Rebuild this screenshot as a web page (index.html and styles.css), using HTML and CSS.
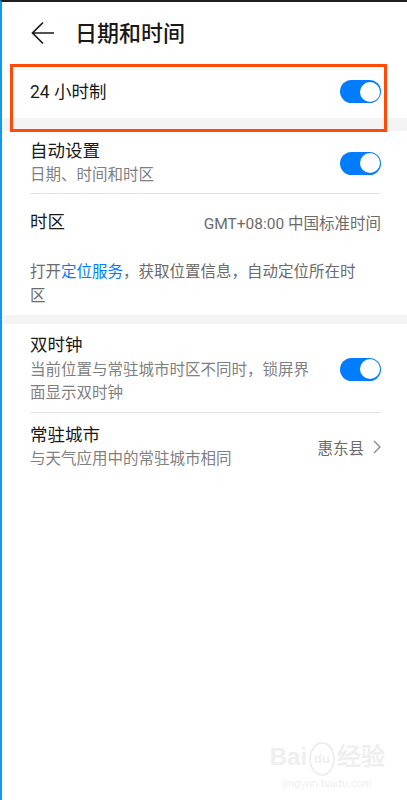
FILE: index.html
```html
<!DOCTYPE html>
<html lang="zh-CN">
<head>
    <meta charset="UTF-8">
    <meta name="viewport" content="width=device-width, initial-scale=1.0">
    <title>日期和时间</title>
    <link rel="stylesheet" href="styles.css">
</head>
<body>
    <div class="screen">
        <div class="header">
            <svg class="back" width="24" height="24" viewBox="0 0 24 24">
                <path d="M1.5 12 H23 M12 1.5 L1.5 12 L12 22.5" fill="none" stroke="#1a1a1a" stroke-width="1.7"/>
            </svg>
            <h1>日期和时间</h1>
        </div>

        <div class="row single">
            <div class="text">
                <div class="title">24 小时制</div>
            </div>
            <div class="switch on"><span></span></div>
        </div>
        <div class="band first"></div>

        <div class="row">
            <div class="text">
                <div class="title">自动设置</div>
                <div class="sub">日期、时间和时区</div>
            </div>
            <div class="switch on"><span></span></div>
        </div>
        <div class="divider"></div>
        <div class="row zone">
            <div class="text">
                <div class="title">时区</div>
            </div>
            <div class="value">GMT+08:00 中国标准时间</div>
        </div>
        <p class="note">打开<a href="#">定位服务</a>，获取位置信息，自动定位所在时区</p>
        <div class="band"></div>

        <div class="row dual">
            <div class="text">
                <div class="title">双时钟</div>
                <div class="sub">当前位置与常驻城市时区不同时，锁屏界面显示双时钟</div>
            </div>
            <div class="switch on"><span></span></div>
        </div>
        <div class="divider"></div>
        <div class="row city">
            <div class="text">
                <div class="title">常驻城市</div>
                <div class="sub">与天气应用中的常驻城市相同</div>
            </div>
            <div class="value">惠东县
                <svg class="chevron" width="8" height="14" viewBox="0 0 8 14">
                    <path d="M1 1 L7 7 L1 13" fill="none" stroke="#8c8c8c" stroke-width="1.4"/>
                </svg>
            </div>
        </div>

        <!-- рамка-выделение поверх первой строки -->
        <div class="mark"></div>

        <div class="watermark">
            <div class="wm-logo">Bai<span class="paw">du</span>经验</div>
            <div class="wm-url">jingyan.baidu.com</div>
        </div>
    </div>
</body>
</html>
```

FILE: styles.css
```css
body {
    margin: 0;
    background-color: #fff;
    font-family: Roboto, "Noto Sans CJK SC", sans-serif;
    color: #1a1a1a;
}
.screen {
    position: relative;
    width: 405px;
    height: 798px;
    border-top: 2px solid #1f1f1f;
    border-left: 2px solid #0f9bea;
    overflow: hidden;
}
.header {
    display: flex;
    align-items: center;
    height: 63px;
    padding-left: 29px;
}
.back {
    margin-top: -2px;
}
h1 {
    margin: 0 0 0 20px;
    font-size: 22px;
    font-weight: 500;
    line-height: 30px;
    color: #1a1a1a;
}
.row {
    display: flex;
    align-items: center;
    justify-content: space-between;
    padding: 8px 26px 6px 28px;
}
.row.single {
    height: 53px;
    padding-top: 0;
    padding-bottom: 0;
    box-sizing: border-box;
}
.row.zone {
    height: 56px;
    padding-top: 0;
    padding-bottom: 0;
    box-sizing: border-box;
}
.row.dual {
    padding-top: 9px;
    padding-bottom: 7px;
}
.row.city {
    padding-top: 10px;
    padding-bottom: 8px;
}
.text {
    flex: 1;
}
.title {
    font-size: 17.5px;
    line-height: 24px;
    color: #1a1a1a;
}
.sub {
    font-size: 15.5px;
    line-height: 24px;
    color: #7f7f7f;
}
.dual .sub {
    line-height: 23px;
    margin-top: 2px;
    padding-right: 20px;
}
.value {
    display: flex;
    align-items: center;
    font-size: 15.5px;
    color: #6b6b6b;
}
.chevron {
    margin-left: 9px;
}
.switch {
    width: 41px;
    height: 23px;
    border-radius: 12px;
    background-color: #007dff;
    position: relative;
    flex-shrink: 0;
}
.switch span {
    position: absolute;
    right: 1.5px;
    top: 1.5px;
    width: 20px;
    height: 20px;
    border-radius: 50%;
    background-color: #fff;
}
.band {
    height: 9px;
    background-color: #f4f4f4;
}
.band.first {
    height: 13px;
}
.divider {
    height: 1px;
    margin: 0 26px 0 28px;
    background-color: #e3e3e3;
}
.note {
    margin: 0;
    padding: 10px 46px 7px 28px;
    font-size: 15.5px;
    line-height: 24px;
    color: #6b6b6b;
}
.note a {
    color: #007dff;
    text-decoration: none;
}
.mark {
    position: absolute;
    left: 8px;
    top: 62px;
    width: 371px;
    height: 62px;
    border: 3px solid #ff4a0a;
}
.watermark {
    position: absolute;
    right: 22px;
    bottom: 10px;
    color: #efefef;
    text-align: center;
    font-family: "Liberation Sans", sans-serif;
}
.wm-logo {
    font-size: 24px;
    font-weight: bold;
    line-height: 26px;
}
.paw {
    display: inline-block;
    font-size: 13px;
    border: 2px solid #efefef;
    border-radius: 50%;
    padding: 2px 3px;
    margin: 0 2px;
    vertical-align: middle;
}
.wm-url {
    font-size: 11px;
    line-height: 14px;
}
```
